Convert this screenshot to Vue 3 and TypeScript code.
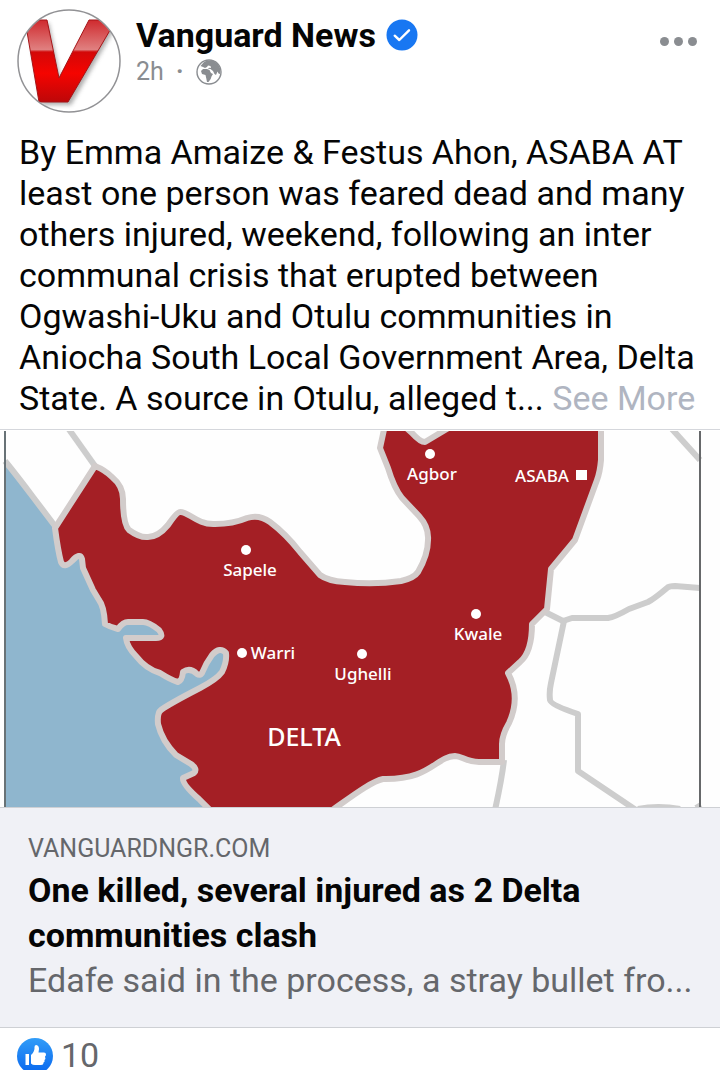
<script setup lang="ts">
interface Place {
  name: string
  x: number
  y: number
  dotX: number
  dotY: number
}

const places: Place[] = [
  { name: 'Sapele', x: 250, y: 576, dotX: 246, dotY: 550 },
  { name: 'Warri', x: 273, y: 659, dotX: 242, dotY: 653 },
  { name: 'Ughelli', x: 363, y: 680, dotX: 362, dotY: 654 },
  { name: 'Kwale', x: 478, y: 640, dotX: 476, dotY: 614 },
  { name: 'Agbor', x: 432, y: 480, dotX: 430, dotY: 454 },
]

const reactions = 10
</script>

<template>
  <article class="post">
    <header class="head">
      <a class="avatar" href="#" aria-label="Vanguard News profile">
        <svg viewBox="0 0 104 104" aria-hidden="true">
          <defs>
            <clipPath id="disc"><circle cx="52" cy="52" r="51" /></clipPath>
            <linearGradient id="gloss" x1="0" y1="0" x2="0" y2="1">
              <stop offset="0" stop-color="#cf2a2e" />
              <stop offset="0.36" stop-color="#e08080" />
              <stop offset="0.39" stop-color="#d30808" />
              <stop offset="0.65" stop-color="#f50400" />
              <stop offset="1" stop-color="#bd0709" />
            </linearGradient>
            <filter id="soft" x="-20%" y="-20%" width="140%" height="140%">
              <feGaussianBlur stdDeviation="2" />
            </filter>
          </defs>
          <circle cx="52" cy="52" r="52" fill="#fff" />
          <g clip-path="url(#disc)">
            <path d="M11 14H32L44 72L74 14H101L54 96H25Z" fill="#777" opacity="0.6" filter="url(#soft)" />
            <path d="M8 11H30L42 69L72 11H99L51 93H22Z" fill="url(#gloss)" stroke="#a51518" stroke-width="1" />
          </g>
          <circle cx="52" cy="52" r="51" fill="none" stroke="#929295" stroke-width="1.5" />
        </svg>
      </a>
      <div class="who">
        <div class="name-row">
          <a class="name" href="#">Vanguard News</a>
          <svg class="verified" viewBox="0 0 32 32" role="img" aria-label="Verified">
            <circle cx="16" cy="16" r="15.5" fill="#1877f2" />
            <path d="M8.7 16.7L13.3 21L23 11.3" fill="none" stroke="#fff" stroke-width="2.4" stroke-linecap="round" stroke-linejoin="round" />
          </svg>
        </div>
        <div class="meta">
          <span>2h</span>
          <span class="sep">·</span>
          <svg class="globe" viewBox="0 0 26 26" role="img" aria-label="Public">
            <circle cx="13" cy="13" r="12" fill="#fff" stroke="#8a8d91" stroke-width="1.4" />
            <path d="M4.5 7L8 3L11 1.5L17 1.5L22 5L24.5 10L24 15L22.5 14.5L21.5 12.5L20 16L18.5 15L17 12L14.5 10L12 9.8L13 8.8L15 9L14.5 7L12 6.5L11 8L9 9L7 8Z" fill="#8a8d91" />
            <path d="M5 12L7 10L11 10L13.5 11L15 14L17 15L15.5 17.5L14.7 20L12.5 23H11L10.2 19L9.5 16L6 15Z" fill="#8a8d91" />
          </svg>
        </div>
      </div>
      <button class="more" type="button" aria-label="More options">
        <span class="dot"></span><span class="dot"></span><span class="dot"></span>
      </button>
    </header>

    <p class="body">
      By Emma Amaize &amp; Festus Ahon, ASABA AT least one person was feared dead and many others
      injured, weekend, following an inter communal crisis that erupted between Ogwashi-Uku and
      Otulu communities in Aniocha South Local Government Area, Delta State. A source in Otulu,
      alleged t... <button class="see-more" type="button">See More</button>
    </p>

    <section class="card">
      <svg class="map" viewBox="0 431 720 376" role="img" aria-label="Map of Delta State">
        <rect x="0" y="431" width="720" height="376" fill="#fefefe" />
        <path d="M5 461L33 497L55 525L250 640L220 807H5Z" fill="#8fb6ce" />
        <g class="border">
          <path d="M5 461Q18 477 33 497L55 526" />
          <path d="M68 428L95 466" />
          <path d="M545 612L563 621L572 618H608Q615 617 629 609L648 602Q654 599 667 588Q669 586 675 586L700 588" />
          <path d="M564 621L551 683Q549 692 550 700Q551 705 578 714V771L636 810" />
          <path d="M504 760Q502 778 495 810" />
          <path d="M671 428L700 460" />
          <path d="M638 809Q658 805 680 809M696 808L701 805" />
        </g>
        <path
          class="state"
          d="M95 466Q105 470 112 477Q123 486 123 499Q123 524 129 530Q140 538 148 537Q158 537 168 525Q177 512 180 512C188 511 197 525 215 524Q233 524 247 518Q259 514 270 522Q286 534 300 552L320 575Q328 581 345 582Q374 585 401 581Q414 578 418 572Q428 555 428 540Q429 527 419 516L402 498Q394 488 388 468L380 448L385 425H403L412 433Q420 442 425 442L450 427H601V460Q600 472 597 480L575 540L551 569L547 609L532 624Q532 652 520 662L508 673Q521 697 509 723Q502 735 502 744L502 762H479C466 762 462 756 455 756C435 757 431 780 383 779C372 781 351 797 331 811H211L199 799Q182 784 183 778L194 773Q198 769 191 764L176 755Q162 741 158 724Q157 713 161 710Q169 704 200 688Q217 679 222 672Q227 662 226 653Q220 646 212 655Q206 663 202 673Q200 676 197 674Q190 667 183 672Q182 681 178 682Q171 680 160 673Q146 669 136 656Q127 647 126 638H156Q165 638 159 630Q149 622 143 622H128Q123 622 118 629Q110 627 105 624Q104 606 99 600L93 590L83 568L82 559Q80 552 72 561Q64 569 61 562Q58 551 55 528Z"
        />
        <g fill="#fff">
          <template v-for="place in places" :key="place.name">
            <circle :cx="place.dotX" :cy="place.dotY" r="5" />
            <text class="place" :x="place.x" :y="place.y">{{ place.name }}</text>
          </template>
          <rect x="576" y="470" width="11" height="10" />
          <text class="place" x="542" y="482">ASABA</text>
          <text class="region" x="304" y="746">DELTA</text>
        </g>
        <path d="M5 431V807" stroke="#687276" stroke-width="2" />
        <path d="M700 431V807" stroke="#66686a" stroke-width="2" />
      </svg>
      <a class="link" href="#">
        <span class="domain">VANGUARDNGR.COM</span>
        <strong class="title">One killed, several injured as 2 Delta communities clash</strong>
        <span class="summary">Edafe said in the process, a stray bullet fro...</span>
      </a>
    </section>

    <footer class="foot">
      <svg class="like" viewBox="0 0 36 36" role="img" aria-label="Likes">
        <defs>
          <linearGradient id="blue" x1="0" y1="0" x2="0" y2="1">
            <stop offset="0" stop-color="#329df8" />
            <stop offset="1" stop-color="#0866ee" />
          </linearGradient>
        </defs>
        <circle cx="18" cy="18" r="18" fill="url(#blue)" />
        <path d="M8.5 16H12V27H8.5Z" fill="#fff" />
        <path d="M14 17Q18 13.5 17.5 9Q17.5 7 19.3 7Q22 7.5 22 11L21.5 14.5H27Q29 14.5 29 16.5Q29 18 28 18.5Q29 21 27.5 22Q28 24 26.5 24.5Q26.5 27 24 27H18Q15.5 27 14 25.5Z" fill="#fff" />
      </svg>
      <span>{{ reactions }}</span>
    </footer>
  </article>
</template>

<style>
body {
  margin: 0;
  background: #fff;
}
</style>

<style scoped>
.post {
  background: #fff;
  color: #050505;
  font-family: Roboto, "Liberation Sans", sans-serif;
}
.post * {
  box-sizing: border-box;
}
a {
  color: inherit;
  text-decoration: none;
}
button {
  border: 0;
  padding: 0;
  background: none;
  font: inherit;
  cursor: pointer;
}
svg {
  display: block;
}
.head {
  display: flex;
  align-items: flex-start;
  padding: 9px 20px 0 17px;
}
.avatar {
  flex: none;
  width: 104px;
  height: 104px;
}
.who {
  flex: 1;
  padding: 6px 0 0 15px;
}
.name-row {
  display: flex;
  align-items: center;
  gap: 10px;
}
.name {
  font-size: 34px;
  line-height: 40px;
  font-weight: 700;
}
.verified {
  width: 32px;
  height: 32px;
}
.meta {
  display: flex;
  align-items: center;
  font-size: 25px;
  line-height: 34px;
  color: #8a8d91;
}
.sep {
  width: 32px;
  text-align: center;
  font-weight: 700;
}
.globe {
  width: 26px;
  height: 26px;
}
.more {
  display: flex;
  gap: 5px;
  padding: 28px 3px 8px;
}
.dot {
  width: 9px;
  height: 9px;
  border-radius: 50%;
  background: #8a8d91;
}
.body {
  margin: 0;
  padding: 19px 19px 10px;
  font-size: 34px;
  line-height: 41px;
}
.see-more {
  color: #b0b5c1;
}
.card {
  border-top: 1px solid #d5d7dc;
  border-bottom: 1px solid #ced0d4;
}
.map {
  width: 100%;
  height: auto;
  padding-top: 1px;
  box-sizing: content-box !important;
}
.border {
  fill: none;
  stroke: #cdcdcd;
  stroke-width: 6;
  stroke-linejoin: round;
}
.state {
  fill: #a41f25;
  stroke: #d2cccb;
  stroke-width: 6;
  stroke-linejoin: round;
}
.place,
.region {
  font-family: "Noto Sans", "Open Sans", sans-serif;
  font-size: 17px;
  font-weight: 500;
  text-anchor: middle;
}
.region {
  font-size: 25px;
}
.link {
  display: flex;
  flex-direction: column;
  padding: 24px 20px 24px 28px;
  border-top: 1px solid #ced0d4;
  background: #f0f1f6;
}
.domain {
  margin-bottom: 2px;
  font-size: 25px;
  line-height: 34px;
  color: #65676b;
}
.title {
  font-size: 34px;
  line-height: 45px;
  font-weight: 700;
}
.summary {
  font-size: 34px;
  line-height: 45px;
  color: #65676b;
  white-space: nowrap;
  overflow: hidden;
  text-overflow: ellipsis;
}
.foot {
  display: flex;
  align-items: flex-start;
  gap: 8px;
  height: 42px;
  padding: 10px 17px 0;
  overflow: hidden;
  font-size: 34px;
  line-height: 34px;
  color: #65676b;
}
.like {
  flex: none;
  width: 36px;
  height: 36px;
}
</style>
